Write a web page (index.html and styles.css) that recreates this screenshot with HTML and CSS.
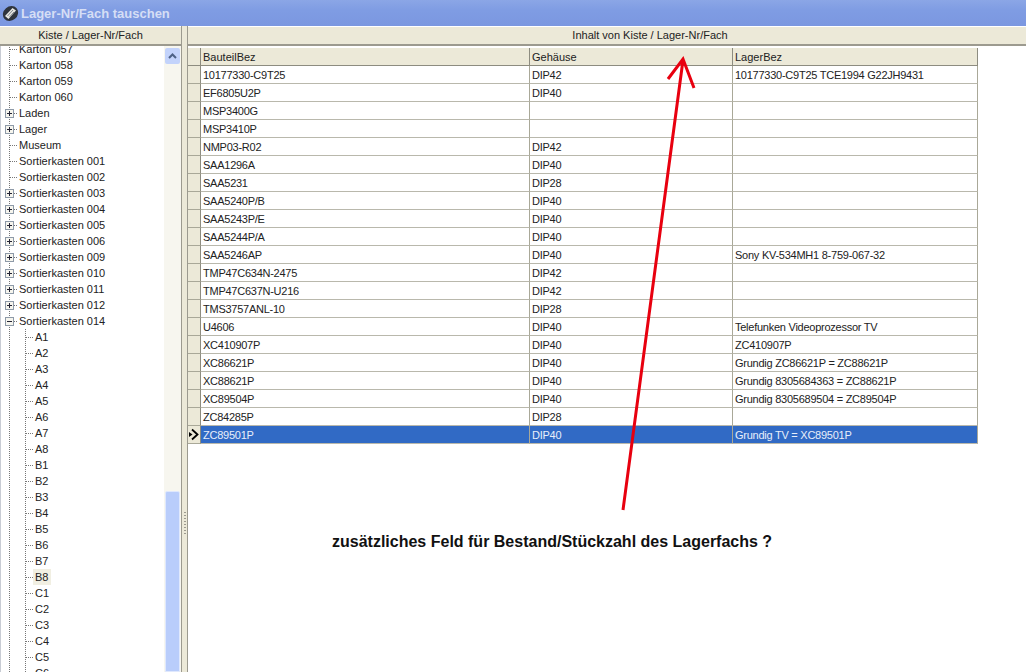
FILE: index.html
```html
<!DOCTYPE html>
<html lang="de">

<head>
  <meta charset="UTF-8">
  <title>Lager-Nr/Fach tauschen</title>
  <link rel="stylesheet" href="styles.css">
</head>

<body>
  <div class="titlebar">
    <svg class="title-icon" width="17" height="17" viewBox="0 0 17 17">
      <ellipse cx="8.5" cy="8.5" rx="8" ry="7" fill="#2f343c" transform="rotate(-40 8.5 8.5)" />
      <path d="M3 11 L10.5 3 L14 5.5 L6.5 14 Z" fill="#e6e6e0" />
      <path d="M5.5 11 L11 5 M7.5 12 L12 7" stroke="#7f848c" stroke-width="1" />
    </svg>
    <span>Lager-Nr/Fach tauschen</span>
  </div>
  <div class="main">
    <div class="left">
      <div class="panel-head">Kiste / Lager-Nr/Fach</div>
      <div class="tree-wrap">
        <ul class="tree">
          <li class="leaf">Karton 057</li>
          <li class="leaf">Karton 058</li>
          <li class="leaf">Karton 059</li>
          <li class="leaf">Karton 060</li>
          <li class="plus">Laden</li>
          <li class="plus">Lager</li>
          <li class="leaf">Museum</li>
          <li class="leaf">Sortierkasten 001</li>
          <li class="leaf">Sortierkasten 002</li>
          <li class="plus">Sortierkasten 003</li>
          <li class="plus">Sortierkasten 004</li>
          <li class="plus">Sortierkasten 005</li>
          <li class="plus">Sortierkasten 006</li>
          <li class="plus">Sortierkasten 009</li>
          <li class="plus">Sortierkasten 010</li>
          <li class="plus">Sortierkasten 011</li>
          <li class="plus">Sortierkasten 012</li>
          <li class="minus">Sortierkasten 014</li>
          <li class="sub">A1</li>
          <li class="sub">A2</li>
          <li class="sub">A3</li>
          <li class="sub">A4</li>
          <li class="sub">A5</li>
          <li class="sub">A6</li>
          <li class="sub">A7</li>
          <li class="sub">A8</li>
          <li class="sub">B1</li>
          <li class="sub">B2</li>
          <li class="sub">B3</li>
          <li class="sub">B4</li>
          <li class="sub">B5</li>
          <li class="sub">B6</li>
          <li class="sub">B7</li>
          <li class="sub current">B8</li>
          <li class="sub">C1</li>
          <li class="sub">C2</li>
          <li class="sub">C3</li>
          <li class="sub">C4</li>
          <li class="sub">C5</li>
          <li class="sub">C6</li>
        </ul>
        <div class="scrollbar">
          <div class="scroll-up">
            <svg width="9" height="6" viewBox="0 0 9 6">
              <path d="M1 5 L4.5 1.5 L8 5" fill="none" stroke="#4d6185" stroke-width="2" />
            </svg>
          </div>
          <div class="scroll-thumb"></div>
        </div>
      </div>
    </div>
    <div class="splitter"><span class="grip"></span></div>
    <div class="right">
      <div class="panel-head wide">Inhalt von Kiste / Lager-Nr/Fach</div>
      <table class="grid">
        <colgroup>
          <col class="col-ind">
          <col class="col-a">
          <col class="col-b">
          <col class="col-c">
        </colgroup>
        <thead>
          <tr><th></th><th>BauteilBez</th><th>Gehäuse</th><th>LagerBez</th></tr>
        </thead>
        <tbody>
          <tr><th></th><td>10177330-C9T25</td><td>DIP42</td><td>10177330-C9T25 TCE1994 G22JH9431</td></tr>
          <tr><th></th><td>EF6805U2P</td><td>DIP40</td><td></td></tr>
          <tr><th></th><td>MSP3400G</td><td></td><td></td></tr>
          <tr><th></th><td>MSP3410P</td><td></td><td></td></tr>
          <tr><th></th><td>NMP03-R02</td><td>DIP42</td><td></td></tr>
          <tr><th></th><td>SAA1296A</td><td>DIP40</td><td></td></tr>
          <tr><th></th><td>SAA5231</td><td>DIP28</td><td></td></tr>
          <tr><th></th><td>SAA5240P/B</td><td>DIP40</td><td></td></tr>
          <tr><th></th><td>SAA5243P/E</td><td>DIP40</td><td></td></tr>
          <tr><th></th><td>SAA5244P/A</td><td>DIP40</td><td></td></tr>
          <tr><th></th><td>SAA5246AP</td><td>DIP40</td><td>Sony KV-534MH1 8-759-067-32</td></tr>
          <tr><th></th><td>TMP47C634N-2475</td><td>DIP42</td><td></td></tr>
          <tr><th></th><td>TMP47C637N-U216</td><td>DIP42</td><td></td></tr>
          <tr><th></th><td>TMS3757ANL-10</td><td>DIP28</td><td></td></tr>
          <tr><th></th><td>U4606</td><td>DIP40</td><td>Telefunken Videoprozessor TV</td></tr>
          <tr><th></th><td>XC410907P</td><td>DIP40</td><td>ZC410907P</td></tr>
          <tr><th></th><td>XC86621P</td><td>DIP40</td><td>Grundig ZC86621P = ZC88621P</td></tr>
          <tr><th></th><td>XC88621P</td><td>DIP40</td><td>Grundig 8305684363 = ZC88621P</td></tr>
          <tr><th></th><td>XC89504P</td><td>DIP40</td><td>Grundig 8305689504 = ZC89504P</td></tr>
          <tr><th></th><td>ZC84285P</td><td>DIP28</td><td></td></tr>
          <tr class="selected">
            <th>
              <svg width="12" height="13" viewBox="0 0 12 13">
                <path d="M4 1.5 L9.5 6.5 L4 11.5" fill="none" stroke="#000" stroke-width="1.8" />
                <path d="M1 4 L4.5 6.5 L1 9 Z" fill="#000" />
              </svg>
            </th>
            <td>ZC89501P</td><td>DIP40</td><td>Grundig TV = XC89501P</td>
          </tr>
        </tbody>
      </table>
    </div>
  </div>
  <svg class="arrow" width="1026" height="672" viewBox="0 0 1026 672">
    <path d="M623 510 L683 60 M668 79 L683 59 L694 88" fill="none" stroke="#e8000f" stroke-width="3" />
  </svg>
  <p class="note">zusätzliches Feld für Bestand/Stückzahl des Lagerfachs ?</p>
</body>

</html>
```

FILE: styles.css
```css
html,
body {
  height: 100%;
}

body {
  margin: 0;
  overflow: hidden;
  display: flex;
  flex-direction: column;
  position: relative;
  background-color: #fff;
  font-family: "Liberation Sans", Arial, sans-serif;
  font-size: 11px;
  color: #222;
}

.titlebar {
  height: 26px;
  flex: none;
  box-sizing: border-box;
  padding: 0 0 0 2px;
  display: flex;
  align-items: center;
  gap: 2px;
  background: linear-gradient(#8ba6e6, #7f9ce3 40%, #7b97e0);
  color: #d5def5;
  font-size: 13px;
  font-weight: bold;
}

.main {
  flex: 1;
  display: flex;
  min-height: 0;
}

.left {
  width: 181px;
  flex: none;
  display: flex;
  flex-direction: column;
}

.right {
  flex: 1;
  min-width: 0;
  overflow: hidden;
}

.splitter {
  width: 7px;
  flex: none;
  box-sizing: border-box;
  background-color: #ece9d8;
  border-left: 1px solid #9c9a8f;
  border-right: 1px solid #9c9a8f;
}

.grip {
  display: block;
  width: 2px;
  height: 24px;
  margin: 486px 0 0 2px;
  background: repeating-linear-gradient(#9c9a8f 0 1px, transparent 1px 3px);
}

.panel-head {
  height: 19px;
  box-sizing: border-box;
  margin-top: 1px;
  background-color: #ece9d8;
  border-bottom: 2px solid #9c9a8f;
  text-align: center;
  line-height: 17px;
}

/* the window runs on past the right edge, so the caption sits off centre */
.panel-head.wide {
  width: 924px;
}

.tree-wrap {
  flex: 1;
  min-height: 0;
  display: flex;
  overflow: hidden;
  border-left: 1px solid #c8ccd4;
  background-color: #fff;
}

.tree {
  flex: 1;
  list-style: none;
  margin: -5px 0 0;
  padding: 0;
  background: repeating-linear-gradient(#777 0 1px, transparent 1px 2px) 8px 0 / 1px 100% no-repeat;
}

.tree li {
  height: 16px;
  line-height: 16px;
  padding-left: 18px;
  white-space: nowrap;
  position: relative;
}

.tree li::before {
  content: "";
  position: absolute;
  left: 9px;
  top: 8px;
  width: 8px;
  height: 1px;
  background: repeating-linear-gradient(90deg, #777 0 1px, transparent 1px 2px);
}

.tree .sub {
  padding-left: 34px;
  background: repeating-linear-gradient(#777 0 1px, transparent 1px 2px) 24px 0 / 1px 100% no-repeat;
}

.tree .sub::before {
  left: 25px;
}

.tree .current {
  background-image:
    repeating-linear-gradient(#777 0 1px, transparent 1px 2px),
    linear-gradient(#f1efe2, #f1efe2);
  background-size: 1px 100%, 18px 100%;
  background-position: 24px 0, 32px 0;
  background-repeat: no-repeat;
}

.tree .plus::after,
.tree .minus::after {
  content: "";
  position: absolute;
  left: 4px;
  top: 4px;
  width: 9px;
  height: 9px;
  box-sizing: border-box;
  border: 1px solid #8e9aa8;
  background:
    linear-gradient(#223, #223) 1px 3px / 5px 1px no-repeat,
    #f6f5ee;
}

.tree .plus::after {
  background:
    linear-gradient(#223, #223) 1px 3px / 5px 1px no-repeat,
    linear-gradient(#223, #223) 3px 1px / 1px 5px no-repeat,
    #f6f5ee;
}

.scrollbar {
  width: 17px;
  flex: none;
  display: flex;
  flex-direction: column;
  justify-content: space-between;
  background-color: #f7f6ef;
}

.scroll-up {
  height: 16px;
  margin: 2px 1px 0;
  border-radius: 2px;
  background-color: #c3d3fb;
  display: flex;
  align-items: center;
  justify-content: center;
}

.scroll-thumb {
  height: 181px;
  margin: 0 1px;
  box-sizing: border-box;
  background-color: #b9cdfb;
  border: 1px solid #dfe8fd;
  border-radius: 2px 2px 0 0;
}

.grid {
  width: 790px;
  margin-top: 2px;
  table-layout: fixed;
  border-collapse: separate;
  border-spacing: 0;
  font-size: 11px;
}

.col-ind {
  width: 13px;
}

.col-a {
  width: 329px;
}

.col-b {
  width: 203px;
}

.grid th,
.grid td {
  height: 18px;
  box-sizing: border-box;
  padding: 0 2px;
  font-weight: normal;
  text-align: left;
  white-space: nowrap;
  overflow: hidden;
  border-right: 1px solid #a9a898;
  border-bottom: 1px solid #b9b8ac;
}

.grid td {
  letter-spacing: -0.25px;
}

.grid th {
  background-color: #ece9d8;
  border-right-color: #8d8c80;
}

.grid thead th {
  border-bottom: 1px solid #8d8c80;
}

.grid tbody th {
  padding: 0;
  line-height: 0;
  border-bottom-color: #a9a898;
}

.selected td {
  background-color: #316ac5;
  color: #e8eefa;
}

.arrow {
  position: absolute;
  left: 0;
  top: 0;
  pointer-events: none;
}

.note {
  position: absolute;
  left: 332px;
  top: 533px;
  margin: 0;
  font-size: 16px;
  font-weight: bold;
  color: #111;
  white-space: nowrap;
}
```
